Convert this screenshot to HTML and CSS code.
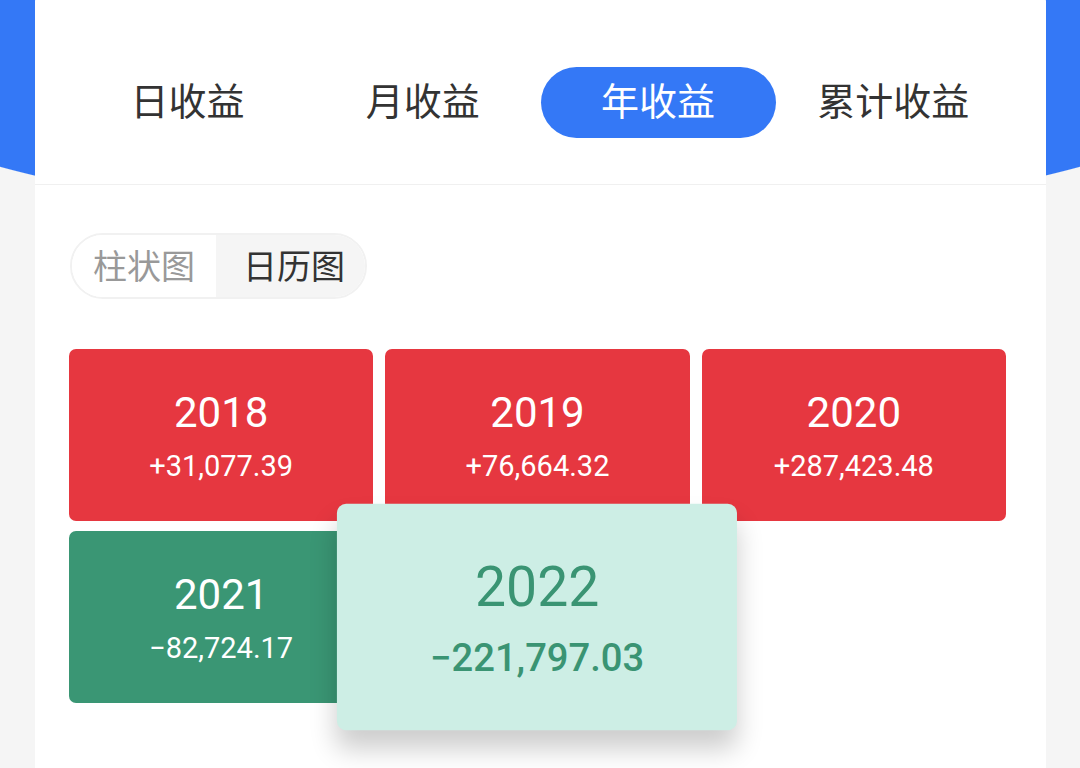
FILE: index.html
```html
<!DOCTYPE html>
<html>
<head>
<meta charset="utf-8">
<title>收益日历</title>
<link rel="stylesheet" href="styles.css">
</head>
<body>

<div class="card">
<div class="tabs">
<div class="tab">日收益</div>
<div class="tab">月收益</div>
<div class="tab tab_on">年收益</div>
<div class="tab">累计收益</div>
</div>

<div class="card_body">
<div class="seg">
<div class="seg_item">柱状图</div>
<div class="seg_item seg_on">日历图</div>
</div>

<div class="cal">
<div class="cal_cell up"><div class="yr">2018</div><div class="amt">+31,077.39</div></div>
<div class="cal_cell up"><div class="yr">2019</div><div class="amt">+76,664.32</div></div>
<div class="cal_cell up"><div class="yr">2020</div><div class="amt">+287,423.48</div></div>
<div class="cal_cell down"><div class="yr">2021</div><div class="amt">−82,724.17</div></div>
<div class="cal_cell down cal_hover"><div class="yr">2022</div><div class="amt">−221,797.03</div></div>
</div>
</div>
</div>

</body>
</html>
```

FILE: styles.css
```css
html, body {margin:0;padding:0;height:100%;}
body {
background:#f5f5f5 radial-gradient(ellipse 750px 195px at 50% 32px, #3478f6 99.6%, rgba(52,120,246,0) 100%) no-repeat;
font-family:Roboto, "Noto Sans CJK SC", sans-serif;
overflow:hidden;
}

.card {margin:-14px 34px 0 35px;background:#fff;border-radius:16px;height:800px;}

.tabs {display:grid;grid-template-columns:repeat(4, 1fr);padding:81px 35px 46px;border-bottom:1px solid #f0f0f0;}
.tab {height:71px;line-height:64px;text-align:center;font-family:"Noto Sans CJK SC", sans-serif;font-size:38px;color:#333;border-radius:36px;}
.tab_on {background:#3478f6;color:#fff;}

.card_body {padding:48px 40px 0 34px;}

.seg {display:inline-flex;margin-left:1px;border:2px solid #f1f1f1;border-radius:34px;overflow:hidden;height:62px;}
.seg_item {padding:0 21px 0 21px;line-height:60px;font-family:"Noto Sans CJK SC", sans-serif;font-size:34px;color:#999;background:#fff;}
.seg_on {color:#333;background:#f5f5f5;padding:0 20px 0 27px;}

.cal {display:grid;grid-template-columns:repeat(3, 1fr);column-gap:12px;row-gap:10px;margin-top:50px;}
.cal_cell {height:172px;border-radius:7px;display:flex;flex-direction:column;align-items:center;justify-content:center;gap:11px;color:#fff;}
.cal_cell.up {background:#e63740;}
.cal_cell.down {background:#3a9674;}
.yr {font-size:42px;line-height:50px;}
.amt {font-size:29px;line-height:34px;}

.cal_cell.cal_hover {background:#cdeee5;color:#3a9473;transform:scale(1.316);border-radius:7px;box-shadow:0 14px 20px rgba(0,0,0,0.2);}
.cal_hover .amt {font-weight:500;}
```
